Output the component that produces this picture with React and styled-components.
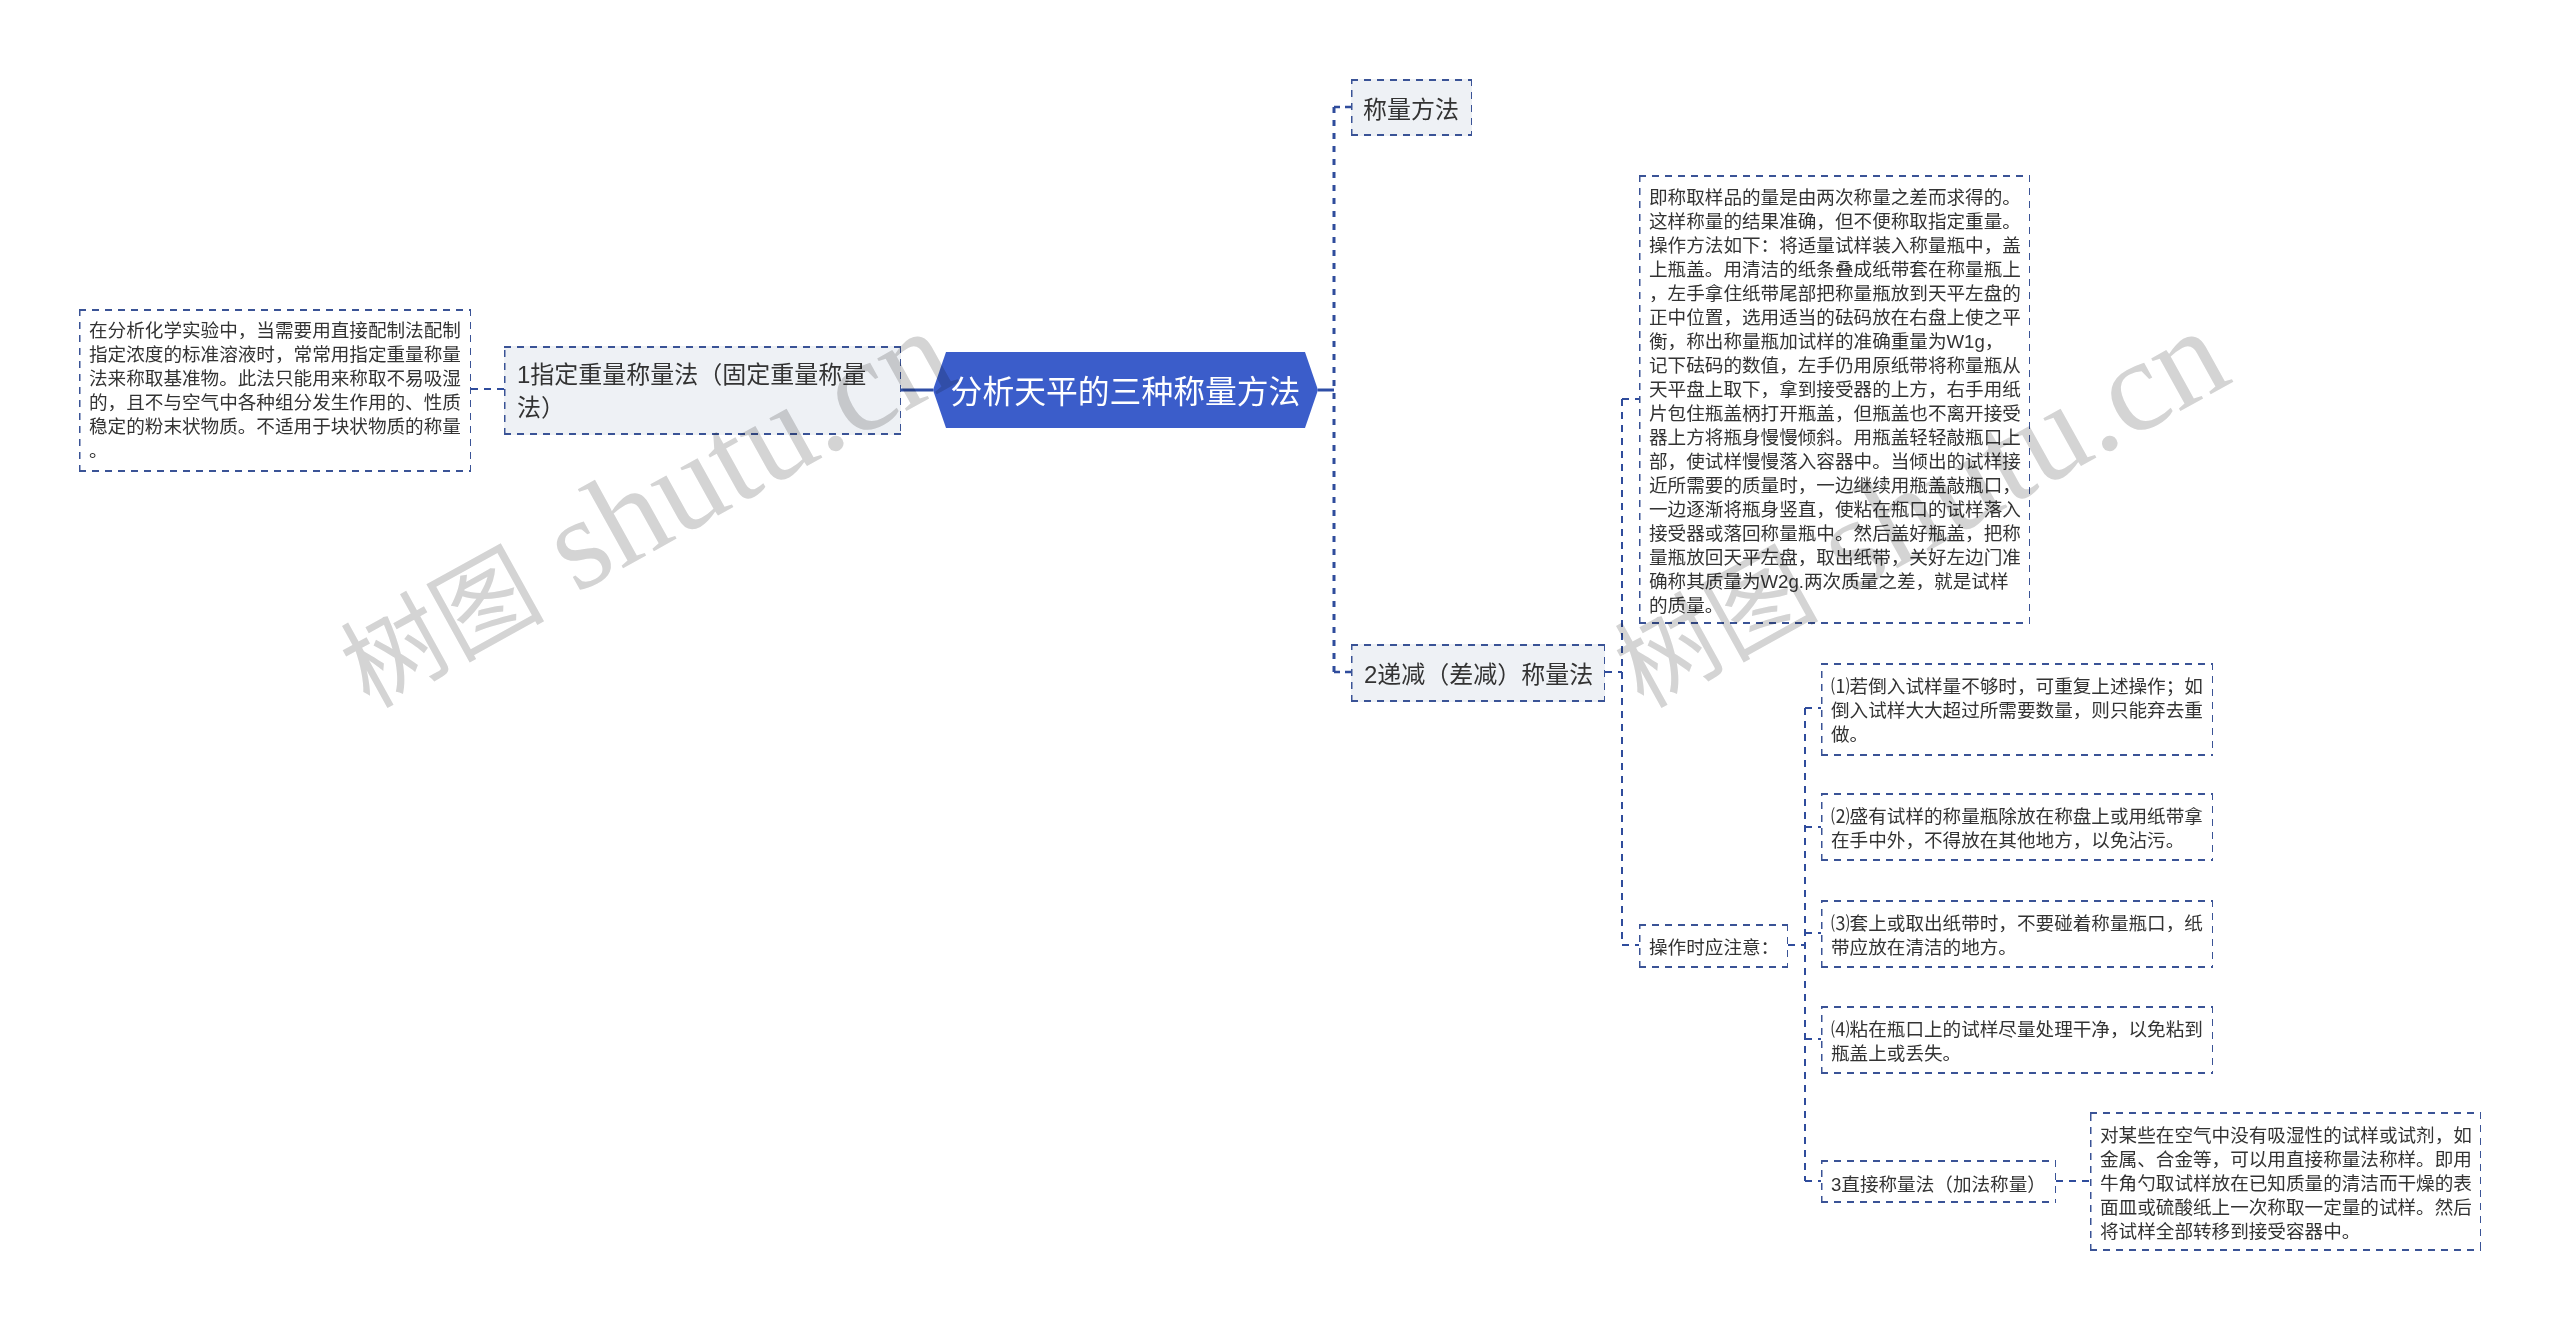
import React from "react";
import styled, { createGlobalStyle, css } from "styled-components";

const Global = createGlobalStyle`
  html, body {
    margin: 0;
    background: #fff;
  }
`;

const Canvas = styled.div`
  position: relative;
  width: 2560px;
  height: 1330px;
  overflow: hidden;
  background: #fff;
  font-family: "Liberation Sans", "Noto Sans CJK SC", sans-serif;
  color: #333;
`;

const Links = styled.svg`
  position: absolute;
  left: 0;
  top: 0;
`;

const dashed = (c) => css`
  background-image:
    repeating-linear-gradient(90deg, ${c} 0 7px, transparent 7px 13px),
    repeating-linear-gradient(90deg, ${c} 0 7px, transparent 7px 13px),
    repeating-linear-gradient(0deg, ${c} 0 7px, transparent 7px 13px),
    repeating-linear-gradient(180deg, ${c} 0 7px, transparent 7px 13px);
  background-size: 100% 2px, 100% 2px, 1.5px 100%, 1.5px 100%;
  background-position: 0 0, 0 100%, 0 0, 100% 0;
  background-repeat: no-repeat;
`;

const Node = styled.div`
  position: absolute;
  left: ${(p) => p.$x}px;
  top: ${(p) => p.$y}px;
  width: ${(p) => p.$w}px;
  height: ${(p) => p.$h}px;
  box-sizing: border-box;
  display: flex;
  flex-direction: column;
  justify-content: center;
  padding: ${(p) => p.$shift ?? 3}px 0 0 ${(p) => p.$pad || 10}px;
  background-color: ${(p) => (p.$branch ? "#eef1f5" : "#fff")};
  ${dashed("#3a5396")}
  font-size: ${(p) => (p.$branch ? "24px" : "18.6px")};
  line-height: ${(p) => (p.$branch ? "33px" : "24px")};
`;

const Line = styled.span`
  display: block;
  white-space: nowrap;
`;

const Root = styled.div`
  position: absolute;
  left: 933px;
  top: 352px;
  width: 385px;
  height: 76px;
  box-sizing: border-box;
  padding-bottom: 3px;
  display: flex;
  align-items: center;
  justify-content: center;
  background: #3b5dca;
  clip-path: polygon(13px 0, 372px 0, 100% 50%, 372px 100%, 13px 100%, 0 50%);
  color: #fff;
  font-size: 31.8px;
  white-space: nowrap;
`;

const Watermark = styled.div`
  position: absolute;
  left: ${(p) => p.$x}px;
  top: 596px;
  transform-origin: 0 100%;
  transform: rotate(-29deg);
  font-family: "Liberation Serif", "Noto Sans CJK SC", serif;
  font-size: 131px;
  line-height: 130px;
  white-space: nowrap;
  color: #d4d4d4;
  mix-blend-mode: multiply;
  pointer-events: none;
`;

const WatermarkHan = styled.span`
  font-size: 102px;
`;

const nodes = [
  {
    x: 79, y: 309, w: 392, h: 163, shift: 0,
    lines: [
      "在分析化学实验中，当需要用直接配制法配制",
      "指定浓度的标准溶液时，常常用指定重量称量",
      "法来称取基准物。此法只能用来称取不易吸湿",
      "的，且不与空气中各种组分发生作用的、性质",
      "稳定的粉末状物质。不适用于块状物质的称量",
      "。",
    ],
  },
  { x: 504, y: 346, w: 397, h: 89, branch: true, pad: 13, shift: 0, lines: ["1指定重量称量法（固定重量称量", "法）"] },
  { x: 1351, y: 79, w: 121, h: 57, branch: true, pad: 12, lines: ["称量方法"] },
  { x: 1351, y: 644, w: 254, h: 58, branch: true, pad: 13, lines: ["2递减（差减）称量法"] },
  {
    x: 1639, y: 175, w: 391, h: 449, shift: 5,
    lines: [
      "即称取样品的量是由两次称量之差而求得的。",
      "这样称量的结果准确，但不便称取指定重量。",
      "操作方法如下：将适量试样装入称量瓶中，盖",
      "上瓶盖。用清洁的纸条叠成纸带套在称量瓶上",
      "，左手拿住纸带尾部把称量瓶放到天平左盘的",
      "正中位置，选用适当的砝码放在右盘上使之平",
      "衡，称出称量瓶加试样的准确重量为W1g，",
      "记下砝码的数值，左手仍用原纸带将称量瓶从",
      "天平盘上取下，拿到接受器的上方，右手用纸",
      "片包住瓶盖柄打开瓶盖，但瓶盖也不离开接受",
      "器上方将瓶身慢慢倾斜。用瓶盖轻轻敲瓶口上",
      "部，使试样慢慢落入容器中。当倾出的试样接",
      "近所需要的质量时，一边继续用瓶盖敲瓶口，",
      "一边逐渐将瓶身竖直，使粘在瓶口的试样落入",
      "接受器或落回称量瓶中。然后盖好瓶盖，把称",
      "量瓶放回天平左盘，取出纸带，关好左边门准",
      "确称其质量为W2g.两次质量之差，就是试样",
      "的质量。",
    ],
  },
  { x: 1639, y: 924, w: 149, h: 44, lines: ["操作时应注意："] },
  {
    x: 1821, y: 663, w: 392, h: 93,
    lines: ["⑴若倒入试样量不够时，可重复上述操作；如", "倒入试样大大超过所需要数量，则只能弃去重", "做。"],
  },
  { x: 1821, y: 793, w: 392, h: 68, lines: ["⑵盛有试样的称量瓶除放在称盘上或用纸带拿", "在手中外，不得放在其他地方，以免沾污。"] },
  { x: 1821, y: 900, w: 392, h: 68, lines: ["⑶套上或取出纸带时，不要碰着称量瓶口，纸", "带应放在清洁的地方。"] },
  { x: 1821, y: 1006, w: 392, h: 68, lines: ["⑷粘在瓶口上的试样尽量处理干净，以免粘到", "瓶盖上或丢失。"] },
  { x: 1821, y: 1160, w: 235, h: 43, shift: 6, lines: ["3直接称量法（加法称量）"] },
  {
    x: 2090, y: 1112, w: 391, h: 139, shift: 5,
    lines: [
      "对某些在空气中没有吸湿性的试样或试剂，如",
      "金属、合金等，可以用直接称量法称样。即用",
      "牛角勺取试样放在已知质量的清洁而干燥的表",
      "面皿或硫酸纸上一次称取一定量的试样。然后",
      "将试样全部转移到接受容器中。",
    ],
  },
];

const ink = "#2f4c9c";

function Connectors() {
  return (
    <Links width="2560" height="1330" fill="none">
      <g stroke="#2f4ea6" strokeWidth="3">
        <path d="M900 390H933" />
        <path d="M1318 390H1334" />
      </g>
      <path d="M1334 107V672" stroke={ink} strokeWidth="3" strokeDasharray="6 7" />
      <path d="M1334 107H1351M1334 672H1351" stroke={ink} strokeWidth="2.5" strokeDasharray="6 5" />
      <g stroke={ink} strokeWidth="2" strokeDasharray="7 6">
        <path d="M471 389H505" />
        <path d="M1605 672H1622" />
        <path d="M1622 399V945" />
        <path d="M1622 399H1639M1622 945H1639" />
        <path d="M1788 945H1805" />
        <path d="M1805 708V1181" />
        <path d="M1805 708H1821M1805 827H1821M1805 933H1821M1805 1039H1821M1805 1181H1821" />
        <path d="M2056 1181H2090" />
      </g>
    </Links>
  );
}

export default function App() {
  return (
    <Canvas>
      <Global />
      <Connectors />
      {nodes.map((n) => (
        <Node key={n.lines[0]} $x={n.x} $y={n.y} $w={n.w} $h={n.h} $branch={n.branch} $pad={n.pad} $shift={n.shift}>
          {n.lines.map((l) => (
            <Line key={l}>{l}</Line>
          ))}
        </Node>
      ))}
      <Root>分析天平的三种称量方法</Root>
      <Watermark $x={384}><WatermarkHan>树图</WatermarkHan> shutu.cn</Watermark>
      <Watermark $x={1658}><WatermarkHan>树图</WatermarkHan> shutu.cn</Watermark>
    </Canvas>
  );
}
